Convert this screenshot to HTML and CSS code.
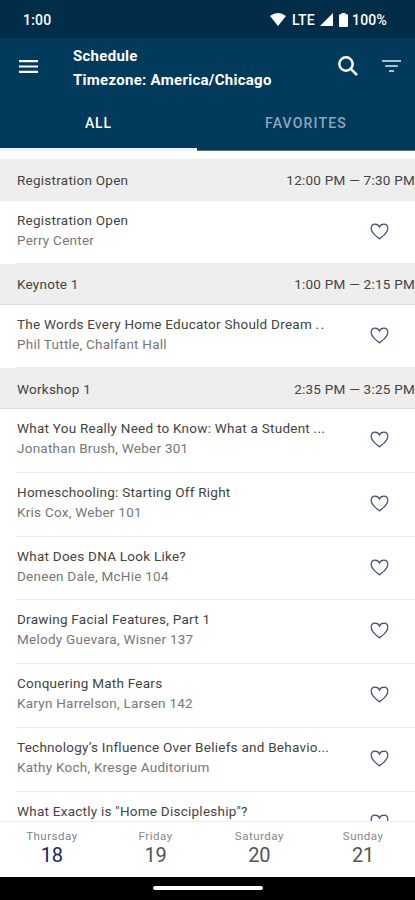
FILE: index.html
```html
<!DOCTYPE html>
<html lang="en">
<head>
<meta charset="utf-8">
<title>Schedule</title>
<link rel="stylesheet" href="styles.css">
</head>
<body>
<svg width="0" height="0" class="defs"><symbol id="heart" viewBox="0 0 20 18"><path d="M10 16.8C7.500 14.500 1.200 10.600 1.200 5.700C1.200 3 3 1.100 5.300 1.100C7.500 1.100 9.200 2.300 10 4.200C10.800 2.300 12.500 1.100 14.700 1.100C17 1.100 18.800 3 18.800 5.700C18.800 10.600 12.500 14.500 10 16.800Z"/></symbol></svg>
<div class="screen">
  <div class="status">
    <span class="clock">1:00</span>
    <div class="indicators">
      <svg class="wifi" viewBox="0 0 16 13"><path d="M0 3Q8-3 16 3L8 13Z"/></svg>
      <span class="lte">LTE</span>
      <svg class="signal" viewBox="0 0 13 13"><path d="M13 0V13H0Z"/></svg>
      <svg class="battery" viewBox="0 0 9 14"><path d="M2.500 0h4v1.300H8q1 0 1 1V13q0 1-1 1H1q-1 0-1-1V2.300q0-1 1-1h1.500z"/></svg>
      <span class="percent">100%</span>
    </div>
  </div>
  <header class="appbar">
    <svg class="menu" viewBox="0 0 19 13"><path d="M0 1.200h19M0 6.500h19M0 11.800h19"/></svg>
    <div class="titles"><div class="t1">Schedule</div><div class="t2">Timezone: America/Chicago</div></div>
    <svg class="search" viewBox="0 0 20 20"><circle cx="8" cy="8" r="6.700"/><path d="M12.800 12.800L19 19"/></svg>
    <svg class="filter" viewBox="0 0 19 12"><path d="M0 1h19M3.200 6h12.600M7 11h5"/></svg>
  </header>
  <nav class="tabs"><div class="tab active">ALL</div><div class="tab">FAVORITES</div></nav>
  <main class="list">
    <div class="head first"><span>Registration Open</span><span>12:00 PM — 7:30 PM</span></div>
    <div class="row last r1"><div><p>Registration Open</p><p class="sub">Perry Center</p></div><svg class="heart"><use href="#heart"/></svg></div>
    <div class="head"><span>Keynote 1</span><span>1:00 PM — 2:15 PM</span></div>
    <div class="row last"><div><p>The Words Every Home Educator Should Dream <span class="dots">..</span></p><p class="sub">Phil Tuttle, Chalfant Hall</p></div><svg class="heart"><use href="#heart"/></svg></div>
    <div class="head"><span>Workshop 1</span><span>2:35 PM — 3:25 PM</span></div>
    <div class="row"><div><p>What You Really Need to Know: What a Student ...</p><p class="sub">Jonathan Brush, Weber 301</p></div><svg class="heart"><use href="#heart"/></svg></div>
    <div class="row"><div><p>Homeschooling: Starting Off Right</p><p class="sub">Kris Cox, Weber 101</p></div><svg class="heart"><use href="#heart"/></svg></div>
    <div class="row"><div><p>What Does DNA Look Like?</p><p class="sub">Deneen Dale, McHie 104</p></div><svg class="heart"><use href="#heart"/></svg></div>
    <div class="row"><div><p>Drawing Facial Features, Part 1</p><p class="sub">Melody Guevara, Wisner 137</p></div><svg class="heart"><use href="#heart"/></svg></div>
    <div class="row"><div><p>Conquering Math Fears</p><p class="sub">Karyn Harrelson, Larsen 142</p></div><svg class="heart"><use href="#heart"/></svg></div>
    <div class="row"><div><p>Technology’s Influence Over Beliefs and Behavio...</p><p class="sub">Kathy Koch, Kresge Auditorium</p></div><svg class="heart"><use href="#heart"/></svg></div>
    <div class="row"><div><p>What Exactly is "Home Discipleship"?</p></div><svg class="heart"><use href="#heart"/></svg></div>
  </main>
  <nav class="days">
    <div class="day on"><span>Thursday</span><b>18</b></div>
    <div class="day"><span>Friday</span><b>19</b></div>
    <div class="day"><span>Saturday</span><b>20</b></div>
    <div class="day"><span>Sunday</span><b>21</b></div>
  </nav>
  <div class="system"><i></i></div>
</div>
</body>
</html>
```
FILE: styles.css
```css
* { box-sizing: border-box; }
body { margin: 0; font-family: Roboto, sans-serif; background: #fff; }
p { margin: 0; }
svg { display: block; flex: none; }
.defs { position: absolute; }
.screen { width: 415px; height: 900px; display: flex; flex-direction: column; overflow: hidden; }
.status { flex: none; height: 38px; background: #022d48; color: #fff; display: flex; align-items: center; justify-content: space-between; padding: 1px 28px 0 23px; font-size: 14px; font-weight: 500; }
.clock { letter-spacing: .2px; }
.indicators { display: flex; align-items: center; }
.indicators svg { fill: #fff; }
.wifi { width: 16px; height: 13px; margin-right: 6px; }
.lte { width: 24px; letter-spacing: .2px; }
.signal { width: 13px; height: 13px; margin-left: 4px; }
.battery { width: 9px; height: 14px; margin: 0 4px 0 6px; }
.percent { letter-spacing: .2px; }
.appbar { flex: none; height: 66px; background: #013a5b; color: #fff; display: flex; align-items: flex-start; }
.menu { width: 19px; height: 13px; margin: 22px 0 0 19px; stroke: #fff; stroke-width: 2.200; }
.titles { width: 263px; margin: 7px 0 0 35px; font-size: 15px; font-weight: 700; line-height: 23px; letter-spacing: .28px; white-space: nowrap; }
.t2 { padding-top: 1px; }
.search { width: 20px; height: 20px; margin: 18px 0 0 2px; fill: none; stroke: #fff; stroke-width: 2.500; }
.filter { width: 19px; height: 12px; margin: 22px 0 0 24px; stroke: #a9bfd4; stroke-width: 1.900; }
.tabs { flex: none; height: 47px; background: #013a5b; display: grid; grid-template-columns: 197px 218px; border-bottom: 1px solid #59728a; }
.tab { height: 47px; line-height: 38px; text-align: center; font-size: 14px; font-weight: 500; letter-spacing: 1.200px; color: #8ea6bd; }
.tab.active { color: #fff; border-bottom: 3px solid #eef0f5; letter-spacing: .9px; }
.list { flex: 1; min-height: 0; overflow: hidden; padding-top: 8px; font-size: 13.500px; letter-spacing: .25px; color: #444; }
.head { height: 41px; background: #eee; border-bottom: 1px solid #dedede; display: flex; justify-content: space-between; align-items: center; padding: 1px 0 0 17px; white-space: nowrap; }
.head.first { height: 42px; border-color: #eee; }
.dots { letter-spacing: 1.500px; }
.row { height: 63.800px; margin-left: 17px; border-bottom: 1px solid #e8e8e8; display: flex; justify-content: space-between; padding: 9px 26px 0 0; line-height: 20px; white-space: nowrap; }
.row.last { height: 63.500px; }
.row.last.r1 { height: 62.500px; }
.sub { color: #777; }
.heart { width: 19px; height: 17px; margin-top: 13px; fill: none; stroke: #484d74; stroke-width: 1.300; }
.days { flex: none; height: 56px; border-top: 1px solid #eee; display: grid; grid-template-columns: repeat(4, 1fr); background: #fff; }
.day { display: flex; flex-direction: column; align-items: center; color: #555; padding-top: 7px; }
.day span { font-size: 11.500px; line-height: 14px; color: #888; letter-spacing: .5px; }
.day b { font-weight: 400; font-size: 20px; line-height: 25px; }
.day.on b { color: #17246c; }
.day.on span { color: #7b7f9c; }
.system { flex: none; height: 23px; background: #000; display: flex; justify-content: center; padding-top: 9px; }
.system i { width: 110px; height: 4px; border-radius: 2px; background: #fff; }
```
